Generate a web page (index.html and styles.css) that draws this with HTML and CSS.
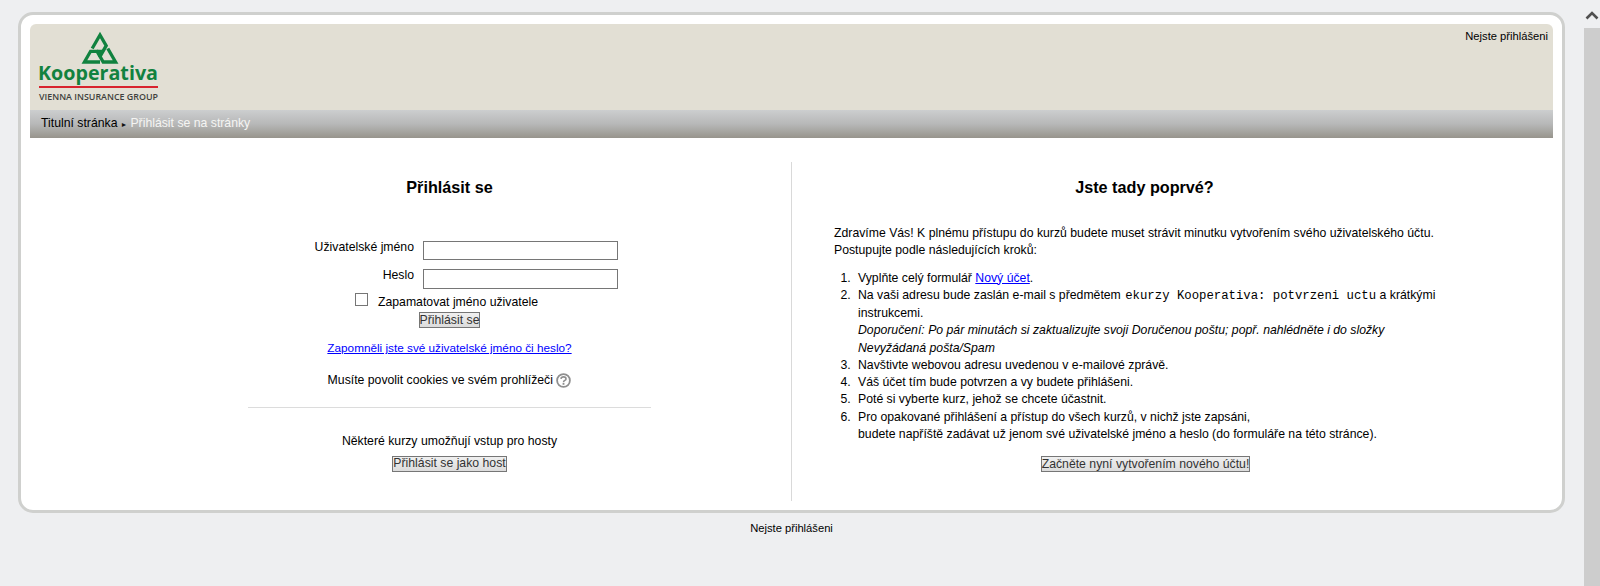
FILE: index.html
```html
<!DOCTYPE html>
<html lang="cs">
<head>
<meta charset="utf-8">
<title>Přihlásit se na stránky</title>
<link rel="stylesheet" href="styles.css">
</head>
<body>
<div class="viewport">
  <div class="page">
    <div class="frame">
      <header class="header">
        <svg class="logo" width="124" height="72" viewBox="0 0 124 72">
          <g fill="none" stroke="#11823f" stroke-width="3.3" stroke-linejoin="miter">
            <path d="M54.2 17.5 L62 4 L68.2 14.7 L61.5 26.3"/>
            <path d="M54.2 17.5 L62 4 L68.2 14.7 L61.5 26.3" transform="rotate(120 62 22)"/>
            <path d="M54.2 17.5 L62 4 L68.2 14.7 L61.5 26.3" transform="rotate(240 62 22)"/>
          </g>
          <text class="logo-name" x="0" y="49" textLength="120" lengthAdjust="spacingAndGlyphs">Kooperativa</text>
          <rect x="1" y="55" width="119" height="2" fill="#d8232f"/>
          <text class="logo-sub" x="1" y="69" textLength="119" lengthAdjust="spacingAndGlyphs">VIENNA INSURANCE GROUP</text>
        </svg>
        <div class="user-info">Nejste přihlášeni</div>
      </header>
      <nav class="crumbs">
        <span class="crumb-first">Titulní stránka</span>
        <span class="crumb-sep">►</span>
        <span class="crumb-current">Přihlásit se na stránky</span>
      </nav>
      <main class="columns">
        <section class="login">
          <h2 class="heading">Přihlásit se</h2>
          <form class="form">
            <div class="field">
              <label class="field-label" for="u">Uživatelské jméno</label>
              <input class="text-input" id="u" type="text">
            </div>
            <div class="field field-second">
              <label class="field-label" for="p">Heslo</label>
              <input class="text-input input-tall" id="p" type="password">
            </div>
            <div class="remember">
              <span class="checkbox"></span>
              <span>Zapamatovat jméno uživatele</span>
            </div>
            <div class="center-row"><button class="btn" type="button">Přihlásit se</button></div>
          </form>
          <p class="forgot"><a href="#">Zapomněli jste své uživatelské jméno či heslo?</a></p>
          <p class="cookies">Musíte povolit cookies ve svém prohlížeči
            <svg class="help" width="15" height="15" viewBox="0 0 15 15">
              <circle cx="7.5" cy="7.5" r="6.4" fill="#fff" stroke="#8f8f8f" stroke-width="1.8"/>
              <path d="M5 5.9 C5.2 3.2 10 3.2 10 5.9 C10 7.6 7.5 7.2 7.5 9.2" fill="none" stroke="#8f8f8f" stroke-width="1.6"/>
              <rect x="6.6" y="10" width="1.8" height="1.8" fill="#8f8f8f"/>
            </svg>
          </p>
          <hr class="rule">
          <p class="guest-text">Některé kurzy umožňují vstup pro hosty</p>
          <div class="center-row guest-action"><button class="btn" type="button">Přihlásit se jako host</button></div>
        </section>
        <section class="signup">
          <h2 class="heading heading-offset">Jste tady poprvé?</h2>
          <div class="intro">Zdravíme Vás! K plnému přístupu do kurzů budete muset strávit minutku vytvořením svého uživatelského účtu.<br>Postupujte podle následujících kroků:</div>
          <ol class="steps">
            <li>Vyplňte celý formulář <a href="#">Nový účet</a>.</li>
            <li>Na vaši adresu bude zaslán e-mail s předmětem <code class="mono">ekurzy Kooperativa: potvrzeni uctu</code> a krátkými instrukcemi.<br><em>Doporučení: Po pár minutách si zaktualizujte svoji Doručenou poštu; popř. nahlédněte i do složky Nevyžádaná pošta/Spam</em></li>
            <li>Navštivte webovou adresu uvedenou v e-mailové zprávě.</li>
            <li>Váš účet tím bude potvrzen a vy budete přihlášeni.</li>
            <li>Poté si vyberte kurz, jehož se chcete účastnit.</li>
            <li>Pro opakované přihlášení a přístup do všech kurzů, v nichž jste zapsáni,<br>budete napříště zadávat už jenom své uživatelské jméno a heslo (do formuláře na této stránce).</li>
          </ol>
          <div class="center-row signup-action"><button class="btn" type="button">Začněte nyní vytvořením nového účtu!</button></div>
        </section>
      </main>
    </div>
    <footer class="foot">Nejste přihlášeni</footer>
  </div>
  <aside class="scrollbar">
    <div class="scroll-head">
      <svg class="scroll-arrow" width="14" height="10" viewBox="0 0 14 10"><path d="M1.5 8.5 L7 3 L12.5 8.5" fill="none" stroke="#505050" stroke-width="2.6"/></svg>
    </div>
    <div class="scroll-track"></div>
  </aside>
</div>
</body>
</html>
```
FILE: styles.css
```css
* { box-sizing: border-box; }
html, body { margin: 0; height: 100%; overflow: hidden; }
body {
  background: #eeeff1;
  color: #000;
  font-family: "Liberation Sans", Arial, sans-serif;
  font-size: 12.25px;
  line-height: 17.25px;
}
a { color: #00f; }
.viewport { display: flex; height: 586px; }
.page { flex: 1; min-width: 0; padding: 12px 19px 0 18px; }
.scrollbar { width: 16px; display: flex; flex-direction: column; }
.scroll-head { height: 28px; display: flex; justify-content: center; padding: 10px 1px 0 0; }
.scroll-track { flex: 1; background: #cdcdcd; }
.frame {
  background: #fff;
  border: 3px solid #cfd0ce;
  border-radius: 15px;
  padding: 9px 9px 0 9px;
  height: 501px;
}
.header {
  background: #e2dfd4;
  border-radius: 6px 6px 0 0;
  height: 86px;
  display: flex;
  justify-content: space-between;
  padding: 7px 5px 0 8px;
}
.logo { display: block; }
.logo-name { font: 700 20px "Open Sans", sans-serif; fill: #11823f; }
.logo-sub { font: 600 8.2px "Open Sans", sans-serif; fill: #3f3f3d; }
.user-info { font-size: 11.2px; line-height: 14px; margin-top: -2px; }
.crumbs {
  height: 28px;
  background: linear-gradient(#cccecf, #b7b8b8 50%, #97948c);
  padding: 5px 11px 0;
  display: flex;
  align-items: baseline;
  gap: 3px;
}
.crumb-sep { font-size: 7px; color: #111; }
.crumb-current { color: #f5f5f3; }
.columns { display: flex; margin-top: 24px; height: 339px; }
.login { width: 762px; border-right: 1px solid #d9d9d9; display: flex; flex-direction: column; text-align: center; padding: 0 140px 0 218px; }
.signup { flex: 1; padding: 0 110px 0 42px; }
.heading { font-size: 16.2px; line-height: 20px; margin: 15px 0 0; text-align: center; }
.heading-offset { padding-left: 12px; }
.form { margin-top: 44px; }
.field { display: flex; justify-content: center; gap: 9px; padding-left: 1px; }
.field-second { margin-top: 9px; }
.field-label { width: 132px; text-align: right; margin-top: -2px; }
.text-input { width: 195px; height: 19px; border: 1px solid #767676; padding: 0; background: #fff; }
.input-tall { height: 20px; }
.remember { display: flex; justify-content: center; align-items: center; gap: 10px; height: 18px; margin-top: 5px; padding-right: 6px; }
.checkbox { width: 13px; height: 13px; border: 1px solid #767676; display: block; margin-top: -8px; }
.center-row { display: flex; justify-content: center; }
.btn {
  font: 12.25px "Liberation Sans", sans-serif;
  color: #333;
  padding: 0;
  height: 16px;
  line-height: 13px;
  border: 1px solid #767676;
  border-radius: 0;
  background: linear-gradient(#f0f0f0, #dcdcdc);
}
.forgot { margin: 11px 0 0; font-size: 11.75px; }
.cookies { margin: 16px 0 0; }
.help { vertical-align: -4px; }
.rule { margin: 17px 0 0; border: 0; border-top: 1px solid #dcdcdc; width: 403px; align-self: center; }
.guest-text { margin: 25px 0 0; }
.guest-action { margin-top: 6px; }
.intro { margin-top: 28px; }
.steps { margin: 10px 0 0; padding-left: 20px; }
.steps li { padding-left: 4px; }
.mono { font-family: "Liberation Mono", monospace; font-size: 12.3px; margin-left: 1px; }
.signup-action { margin-top: 13px; padding-left: 14px; }
.foot { text-align: center; font-size: 11.2px; margin-top: 7px; }
```
